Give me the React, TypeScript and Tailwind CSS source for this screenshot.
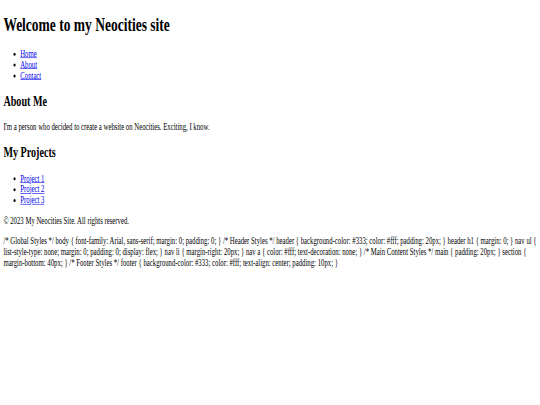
export default function App() {
  const link = "text-[#0000EE] underline";
  return (
    <div className="w-[540px] h-[405px] overflow-hidden bg-white">
      <div
        className="w-[1280px] origin-top-left scale-x-[0.421875] scale-y-[0.605] text-black text-[16px] leading-[normal] px-[8px] pt-[21.5px] pb-[8px]"
        style={{ fontFamily: '"Liberation Serif", "Times New Roman", serif' }}
      >
        <header>
          <h1 className="text-[32px] font-bold mt-0 mb-[21.44px]">Welcome to my Neocities site</h1>
          <nav>
            <ul className="list-disc pl-[40px] my-[16px]">
              <li><a className={link} href="#">Home</a></li>
              <li><a className={link} href="#">About</a></li>
              <li><a className={link} href="#">Contact</a></li>
            </ul>
          </nav>
        </header>
        <main>
          <section>
            <h2 className="text-[24px] font-bold my-[19.92px]">About Me</h2>
            <p className="my-[16px]">I'm a person who decided to create a website on Neocities. Exciting, I know.</p>
          </section>
          <section>
            <h2 className="text-[24px] font-bold my-[19.92px]">My Projects</h2>
            <ul className="list-disc pl-[40px] my-[16px]">
              <li><a className={link} href="#">Project 1</a></li>
              <li><a className={link} href="#">Project 2</a></li>
              <li><a className={link} href="#">Project 3</a></li>
            </ul>
          </section>
        </main>
        <footer>
          <p className="my-[16px]">© 2023 My Neocities Site. All rights reserved.</p>
        </footer>
        <p className="my-[16px]">
          /* Global Styles */ body {"{"} font-family: Arial, sans-serif; margin: 0; padding: 0; {"}"} /* Header Styles */ header {"{"} background-color: #333; color: #fff; padding: 20px; {"}"} header h1 {"{"} margin: 0; {"}"} nav ul {"{"} list-style-type: none; margin: 0; padding: 0; display: flex; {"}"} nav li {"{"} margin-right: 20px; {"}"} nav a {"{"} color: #fff; text-decoration: none; {"}"} /* Main Content Styles */ main {"{"} padding: 20px; {"}"} section {"{"} margin-bottom: 40px; {"}"} /* Footer Styles */ footer {"{"} background-color: #333; color: #fff; text-align: center; padding: 10px; {"}"}
        </p>
      </div>
    </div>
  );
}
